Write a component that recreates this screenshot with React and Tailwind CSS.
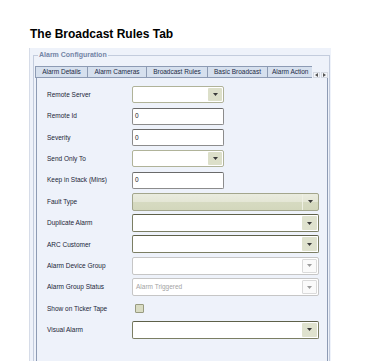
import React from "react";

const font = { fontFamily: '"Liberation Sans", Arial, sans-serif' };

function Tri({ color = "#3a3a3a" }) {
  return (
    <svg width="5" height="3" viewBox="0 0 5 3">
      <polygon points="0,0 5,0 2.5,3" fill={color} />
    </svg>
  );
}

function ComboShort() {
  return (
    <div className="flex h-[17px] w-[92px] rounded-[2px] border border-[#b0b399] bg-white">
      <div className="flex-1" />
      <div className="m-[1px] flex w-[14px] items-center justify-center rounded-[1px] bg-[#dcdfc9]">
        <Tri />
      </div>
    </div>
  );
}

function ComboFilled() {
  return (
    <div className="flex h-[18px] w-[187px] rounded-[2px] border border-[#a3a68c] bg-[linear-gradient(to_bottom,#eaecdf_0%,#e4e6d5_50%,#d6dac1_52%,#d3d7bc_100%)]">
      <div className="flex-1" />
      <div className="flex w-[16px] items-center justify-center border-l border-[#eef0e3]">
        <Tri />
      </div>
    </div>
  );
}

function ComboDark() {
  return (
    <div className="flex h-[18px] w-[187px] rounded-[2px] border border-[#7b7e63] border-t-[#5e6049] bg-white">
      <div className="flex-1" />
      <div className="m-[1px] flex w-[15px] items-center justify-center rounded-[1px] bg-[#dfe2ce]">
        <Tri />
      </div>
    </div>
  );
}

function ComboDisabled({ value }) {
  return (
    <div className="flex h-[18px] w-[187px] items-center rounded-[2px] border border-[#c6c6c6] bg-white">
      <div className="flex-1 pl-[3px] text-[6.5px] text-[#a3a3a3]">{value}</div>
      <div className="m-[1px] flex h-[14px] w-[15px] items-center justify-center rounded-[1px] border border-[#dadada] bg-[#fafafa]">
        <Tri color="#9c9c9c" />
      </div>
    </div>
  );
}

function TextBox({ value }) {
  return (
    <div className="flex h-[17px] w-[92px] items-center rounded-[2px] border border-[#8c8c8c] border-t-[#6a6a6a] bg-white pl-[2px] text-[6.5px] text-[#1a1a1a]">
      {value}
    </div>
  );
}

function Check() {
  return (
    <div className="ml-[3px] h-[9px] w-[9px] rounded-[1px] border border-[#989b80] bg-[#d9dcc3]" />
  );
}

const rows = [
  { label: "Remote Server", type: "short" },
  { label: "Remote Id", type: "text", value: "0" },
  { label: "Severity", type: "text", value: "0" },
  { label: "Send Only To", type: "short" },
  { label: "Keep in Stack (Mins)", type: "text", value: "0" },
  { label: "Fault Type", type: "filled" },
  { label: "Duplicate Alarm", type: "dark" },
  { label: "ARC Customer", type: "dark" },
  { label: "Alarm Device Group", type: "disabled" },
  { label: "Alarm Group Status", type: "disabled", value: "Alarm Triggered" },
  { label: "Show on Ticker Tape", type: "check" },
  { label: "Visual Alarm", type: "dark" },
];

function Field({ row }) {
  switch (row.type) {
    case "short":
      return <ComboShort />;
    case "text":
      return <TextBox value={row.value} />;
    case "filled":
      return <ComboFilled />;
    case "dark":
      return <ComboDark />;
    case "disabled":
      return <ComboDisabled value={row.value} />;
    default:
      return <Check />;
  }
}

const tabs = [
  { label: "Alarm Details", w: "w-[53px]" },
  { label: "Alarm Cameras", w: "w-[59px]" },
  { label: "Broadcast Rules", w: "w-[61px]" },
  { label: "Basic Broadcast", w: "w-[60px]" },
];

export default function App() {
  return (
    <div className="flex h-[361px] w-[375px] flex-col overflow-hidden bg-white" style={font}>
      <div className="pl-[30px] pt-[27px] text-[12px] font-bold leading-[14px] text-black">
        The Broadcast Rules Tab
      </div>
      <div className="ml-[29px] mt-[7px] h-[330px] w-[302px] border-l border-[#d6dce8] bg-[#eef2fa] pt-[2px]">
        <fieldset className="ml-[3px] w-[296px] border border-[#c3ccdd] px-[1px]">
          <legend className="ml-[3px] px-[1px] text-[7px] font-bold leading-[10px] text-[#7384a6]">
            Alarm Configuration
          </legend>
          <div className="mt-[6px] flex items-end">
            <div className="flex h-[12px] w-[277px] overflow-hidden">
              {tabs.map((t, i) => (
                <div
                  key={t.label}
                  className={`${t.w} flex shrink-0 items-center justify-center border border-[#8d9bb4] ${
                    i > 0 ? "border-l-0" : ""
                  } bg-[#d6e0ee] text-[6.5px] whitespace-nowrap text-[#1d2b45]`}
                >
                  {t.label}
                </div>
              ))}
              <div className="flex w-[44px] shrink-0 items-center overflow-hidden border border-l-0 border-r-0 border-[#8d9bb4] bg-[#d6e0ee] pl-[4px] text-[6.5px] whitespace-nowrap text-[#1d2b45]">
                Alarm Action
              </div>
            </div>
            <div className="ml-[1px] flex gap-[1px]">
              <div className="flex h-[6px] w-[7px] items-center justify-center border border-[#d4d9e2] bg-[#f4f6fa]">
                <svg width="3" height="4" viewBox="0 0 3 4">
                  <polygon points="3,0 3,4 0,2" fill="#555" />
                </svg>
              </div>
              <div className="flex h-[6px] w-[7px] items-center justify-center border border-[#d4d9e2] bg-[#f4f6fa]">
                <svg width="3" height="4" viewBox="0 0 3 4">
                  <polygon points="0,0 0,4 3,2" fill="#555" />
                </svg>
              </div>
            </div>
          </div>
          <div className="ml-[1px] h-[300px] w-[292px] border border-t-0 border-[#8d9bb4] pl-[10px] pt-[6px]">
            {rows.map((row) => (
              <div key={row.label} className="flex h-[21.4px] items-center">
                <div className="w-[85px] text-[6.5px] whitespace-nowrap text-[#1b2537]">{row.label}</div>
                <Field row={row} />
              </div>
            ))}
          </div>
        </fieldset>
      </div>
    </div>
  );
}
